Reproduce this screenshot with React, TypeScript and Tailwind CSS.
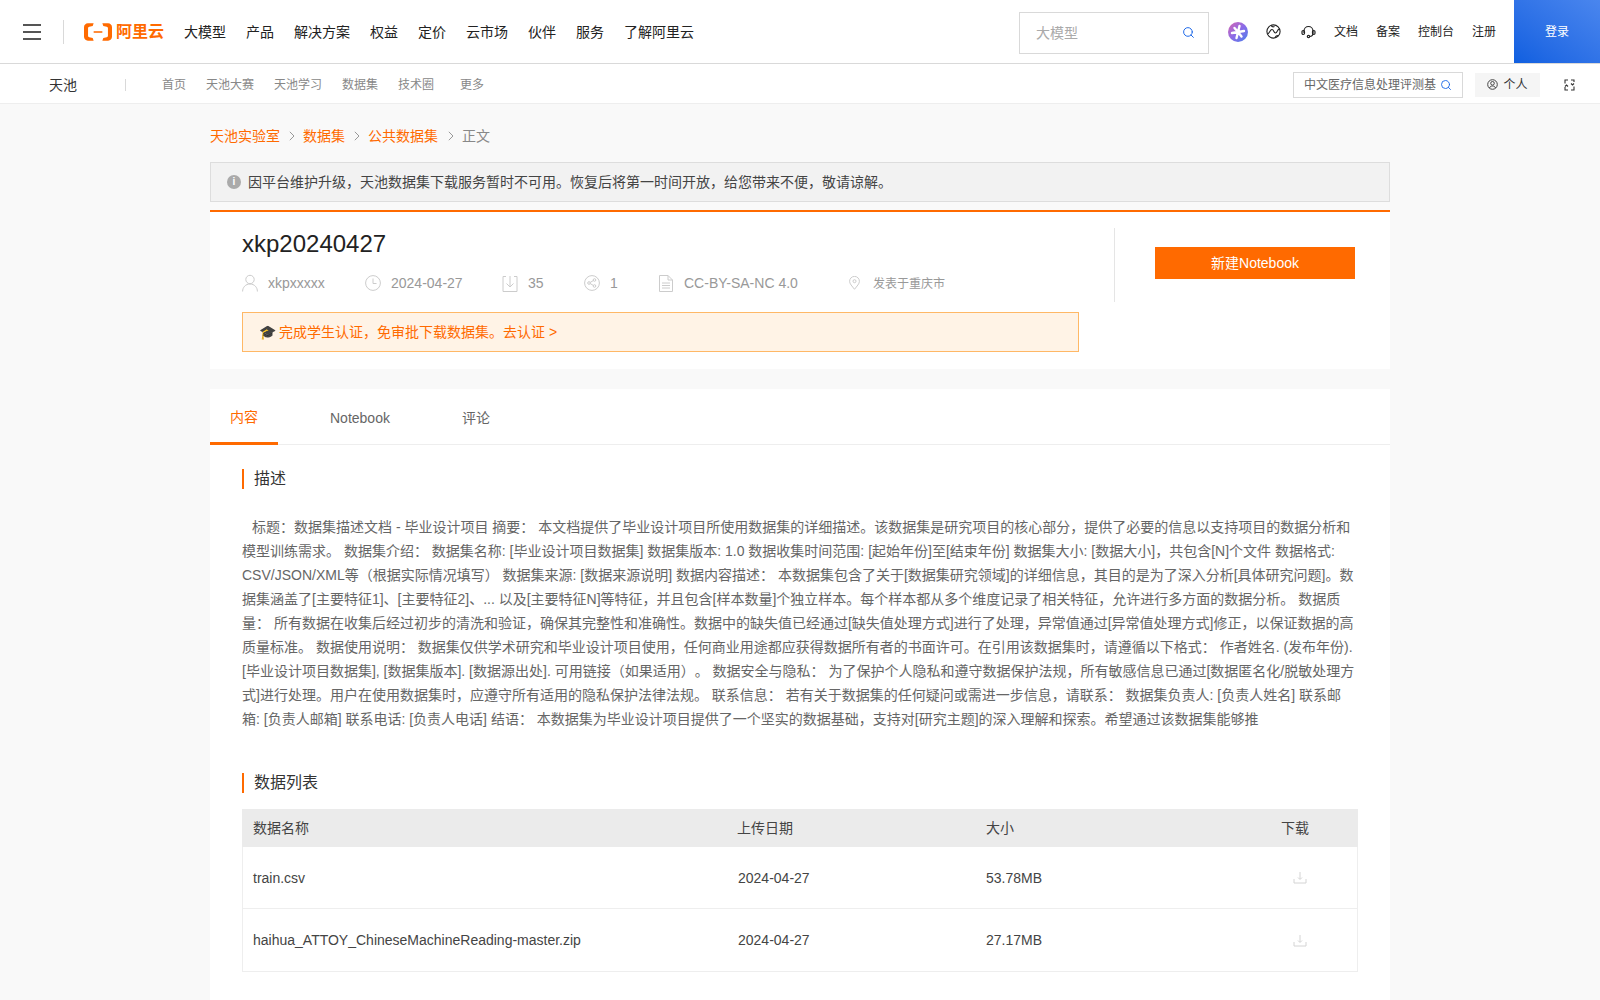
import React from 'react';
import { Search } from 'lucide-react';

const navItems = ['大模型', '产品', '解决方案', '权益', '定价', '云市场', '伙伴', '服务', '了解阿里云'];
const rightLinks = ['文档', '备案', '控制台', '注册'];

const description =
  '标题：数据集描述文档 - 毕业设计项目 摘要： 本文档提供了毕业设计项目所使用数据集的详细描述。该数据集是研究项目的核心部分，提供了必要的信息以支持项目的数据分析和模型训练需求。 数据集介绍： 数据集名称: [毕业设计项目数据集] 数据集版本: 1.0 数据收集时间范围: [起始年份]至[结束年份] 数据集大小: [数据大小]，共包含[N]个文件 数据格式: CSV/JSON/XML等（根据实际情况填写） 数据集来源: [数据来源说明] 数据内容描述： 本数据集包含了关于[数据集研究领域]的详细信息，其目的是为了深入分析[具体研究问题]。数据集涵盖了[主要特征1]、[主要特征2]、... 以及[主要特征N]等特征，并且包含[样本数量]个独立样本。每个样本都从多个维度记录了相关特征，允许进行多方面的数据分析。 数据质量： 所有数据在收集后经过初步的清洗和验证，确保其完整性和准确性。数据中的缺失值已经通过[缺失值处理方式]进行了处理，异常值通过[异常值处理方式]修正，以保证数据的高质量标准。 数据使用说明： 数据集仅供学术研究和毕业设计项目使用，任何商业用途都应获得数据所有者的书面许可。在引用该数据集时，请遵循以下格式： 作者姓名. (发布年份). [毕业设计项目数据集], [数据集版本]. [数据源出处]. 可用链接（如果适用）。 数据安全与隐私： 为了保护个人隐私和遵守数据保护法规，所有敏感信息已通过[数据匿名化/脱敏处理方式]进行处理。用户在使用数据集时，应遵守所有适用的隐私保护法律法规。 联系信息： 若有关于数据集的任何疑问或需进一步信息，请联系： 数据集负责人: [负责人姓名] 联系邮箱: [负责人邮箱] 联系电话: [负责人电话] 结语： 本数据集为毕业设计项目提供了一个坚实的数据基础，支持对[研究主题]的深入理解和探索。希望通过该数据集能够推';

const files = [
  { name: 'train.csv', date: '2024-04-27', size: '53.78MB' },
  { name: 'haihua_ATTOY_ChineseMachineReading-master.zip', date: '2024-04-27', size: '27.17MB' },
];

const Logo = () => (
  <div className="flex items-center gap-1">
    <svg width="28" height="18" viewBox="0 0 29 18" fill="#ff6a00">
      <path d="M10 0H4C1.800 0 0 1.800 0 4v10c0 2.200 1.800 4 4 4h6l-1-2.800-3.500-.8c-.8-.2-1.300-.8-1.300-1.600V5.200c0-.8.5-1.400 1.300-1.600L9 2.800 10 0z" />
      <path d="M19 0h6c2.200 0 4 1.800 4 4v10c0 2.200-1.800 4-4 4h-6l1-2.800 3.500-.8c.8-.2 1.300-.8 1.300-1.600V5.200c0-.8-.5-1.400-1.300-1.600L20 2.800 19 0z" />
      <rect x="10" y="8.200" width="9" height="1.600" />
    </svg>
    <span className="text-base leading-none font-bold text-[#ff6a00]">阿里云</span>
  </div>
);

const StarBadge = () => (
  <div className="w-5 h-5 rounded-full bg-gradient-to-br from-[#d65fb0] via-[#8a6be8] to-[#3f7fea] flex items-center justify-center">
    <svg width="16" height="16" viewBox="0 0 16 16" stroke="#fff" strokeWidth="2.400" strokeLinecap="round">
      <path d="M9.500 2 6.500 14M2 9l12-2M4.500 4 8 8l3.500 4.500" />
    </svg>
  </div>
);

const GlobeIcon = () => (
  <svg width="15" height="15" viewBox="0 0 15 15" fill="none" stroke="#222" strokeWidth="1.100">
    <circle cx="7.500" cy="7.500" r="6.600" />
    <path d="M1.500 10c2-.5 2.500-4.500 4.500-4.500S7.500 9 9.500 9 11.500 4 13.800 5.500M5 1.500c1 1.500 2.500 1.500 3.500 1M9 13.500c.5-1 1.500-2 3-2" />
  </svg>
);

const HeadsetIcon = () => (
  <svg width="15" height="14" viewBox="0 0 15 14" fill="none" stroke="#222" strokeWidth="1.200">
    <path d="M3 8V6a4.500 4.500 0 0 1 9 0v2c0 2-1.500 3.500-3.500 3.500" />
    <rect x="1" y="5.500" width="2.500" height="4" rx="1.200" />
    <rect x="11.500" y="5.500" width="2.500" height="4" rx="1.200" />
    <circle cx="7.500" cy="11.500" r="1.200" />
  </svg>
);

const UserCircle = () => (
  <svg width="11" height="11" viewBox="0 0 11 11" fill="none" stroke="#444" strokeWidth="1">
    <circle cx="5.500" cy="5.500" r="4.800" />
    <circle cx="5.500" cy="4.300" r="1.800" />
    <path d="M2.500 9c.5-1.500 1.700-2 3-2s2.500.5 3 2" />
  </svg>
);

const ExpandIcon = () => (
  <svg width="11" height="12" viewBox="0 0 11 12" fill="none" stroke="#333" strokeWidth="1.100">
    <path d="M4 1H1v3.500M7 1h3v2M1 8v3h3M10 7.500V11H7" />
    <path d="M7 4.500l1.500 1.500L10 4.500M1 7.500 2.500 6 4 7.500" />
  </svg>
);

const Chevron = () => (
  <svg width="6" height="10" viewBox="0 0 6 10" fill="none" stroke="#999" strokeWidth="1">
    <path d="M.8.8 5 5 .8 9.200" />
  </svg>
);

const MetaUser = () => (
  <svg width="16" height="18" viewBox="0 0 16 18" fill="none" stroke="#ccc" strokeWidth="1">
    <circle cx="8" cy="5.500" r="4.200" />
    <path d="M.6 17.500c0-4.200 3-7.500 7.400-7.500s7.400 3.300 7.400 7.500" />
  </svg>
);

const MetaClock = () => (
  <svg width="16" height="16" viewBox="0 0 16 16" fill="none" stroke="#ccc" strokeWidth="1">
    <circle cx="8" cy="8" r="7.400" />
    <path d="M8 3.500V8.500h3.500" />
  </svg>
);

const MetaDownload = () => (
  <svg width="16" height="17" viewBox="0 0 16 17" fill="none" stroke="#ccc" strokeWidth="1">
    <path d="M4 1.500H1v15h14v-15h-3M8 1v11M4.500 8.500 8 12l3.500-3.500" />
  </svg>
);

const MetaShare = () => (
  <svg width="16" height="16" viewBox="0 0 16 16" fill="none" stroke="#ccc" strokeWidth="1">
    <circle cx="8" cy="8" r="7.400" />
    <circle cx="5" cy="8" r="1.300" />
    <circle cx="10.500" cy="5" r="1.300" />
    <circle cx="10.500" cy="11" r="1.300" />
    <path d="M6.200 7.400 9.300 5.600M6.200 8.600l3.100 1.800" />
  </svg>
);

const MetaDoc = () => (
  <svg width="14" height="17" viewBox="0 0 14 17" fill="none" stroke="#ccc" strokeWidth="1">
    <path d="M.5.500h8.500l4.500 4.500v11.500H.500zM9 .5V5h4.500M3 8h8M3 10.500h8M3 13h8" />
  </svg>
);

const MetaPin = () => (
  <svg width="11" height="14" viewBox="0 0 11 14" fill="none" stroke="#ccc" strokeWidth="1">
    <path d="M5.500 13.300C3 10 .6 7.800.6 5.300a4.900 4.900 0 0 1 9.800 0c0 2.500-2.400 4.700-4.900 8z" />
    <circle cx="5.500" cy="5.200" r="1.500" />
  </svg>
);

const RowDownload = () => (
  <svg width="14" height="13" viewBox="0 0 14 13" fill="none" stroke="#d4d4d4" strokeWidth="1">
    <path d="M1 8v4h12V8M7 1v7M5 6.500 7 8.500l2-2" />
  </svg>
);

const SectionTitle = ({ children }: { children: React.ReactNode }) => (
  <div className="h-5 border-l-2 border-[#ff6a00] pl-[10px] flex items-center text-base leading-5 text-[#333]">
    {children}
  </div>
);

export default function App() {
  return (
    <div
      className="h-screen overflow-hidden bg-[#f9f9f9] text-[#333] [text-spacing-trim:space-all]"
      style={{ fontFamily: '"Liberation Sans", "Noto Sans CJK SC", sans-serif' }}
    >
      {/* top bar */}
      <header className="h-16 bg-white border-b border-[#d9d9d9] flex items-center">
        <div className="w-[63px] pl-[23px] shrink-0">
          <div className="w-[18px] h-4 flex flex-col justify-between">
            <div className="h-0.5 bg-[#555]" />
            <div className="h-0.5 bg-[#555]" />
            <div className="h-0.5 bg-[#555]" />
          </div>
        </div>
        <div className="w-px h-6 bg-[#d9d9d9] mr-5" />
        <Logo />
        <nav className="flex gap-5 ml-5 text-sm text-[#222]">
          {navItems.map((item) => (
            <span key={item}>{item}</span>
          ))}
        </nav>
        <div className="ml-auto mt-[2px] w-[190px] h-[42px] border border-[#d9d9d9] flex items-center pl-4 pr-[13px] justify-between">
          <span className="text-sm text-[#aaa]">大模型</span>
          <Search size={13} className="text-[#1a66e8]" strokeWidth={1.800} />
        </div>
        <div className="ml-[19px]"><StarBadge /></div>
        <div className="ml-[18px]"><GlobeIcon /></div>
        <div className="ml-5"><HeadsetIcon /></div>
        <div className="flex gap-[18px] ml-[18px] text-xs text-[#222]">
          {rightLinks.map((item) => (
            <span key={item}>{item}</span>
          ))}
        </div>
        <div className="ml-[18px] w-[86px] h-full bg-gradient-to-tr from-[#0f5fe0] to-[#4a86ee] text-white text-xs flex items-center justify-center">
          登录
        </div>
      </header>

      {/* tianchi bar */}
      <div className="h-10 pt-[2px] bg-white border-b border-[#eee] flex items-center">
        <span className="ml-[49px] text-sm text-[#333]">天池</span>
        <div className="w-px h-3 bg-[#d9d9d9] ml-[48px]" />
        <div className="flex text-xs text-[#888] ml-9">
          <span>首页</span>
          <span className="ml-5">天池大赛</span>
          <span className="ml-5">天池学习</span>
          <span className="ml-5">数据集</span>
          <span className="ml-5">技术圈</span>
          <span className="ml-[26px]">更多</span>
        </div>
        <div className="ml-auto w-[170px] h-[26px] border border-[#d9d9d9] flex items-center pl-2.5 pr-[10px] justify-between">
          <span className="text-xs text-[#666] whitespace-nowrap overflow-hidden w-[132px]">中文医疗信息处理评测基</span>
          <Search size={12} className="text-[#1a66e8]" strokeWidth={1.800} />
        </div>
        <div className="ml-3 w-[65px] h-6 bg-[#f5f5f5] flex items-center justify-center gap-[5px] text-xs text-[#333]">
          <UserCircle />
          <span>个人</span>
        </div>
        <div className="ml-6 mr-[25px]"><ExpandIcon /></div>
      </div>

      <main className="w-[1180px] mx-auto">
        {/* breadcrumb */}
        <div className="h-[58px] pt-[6px] flex items-center text-sm text-[#ff6a00]">
          <span>天池实验室</span>
          <span className="ml-[9px] mr-2"><Chevron /></span>
          <span>数据集</span>
          <span className="ml-[9px] mr-2"><Chevron /></span>
          <span>公共数据集</span>
          <span className="ml-[10px] mr-2"><Chevron /></span>
          <span className="text-[#888]">正文</span>
        </div>

        {/* notice */}
        <div className="h-10 bg-[#f2f2f2] border border-[#ddd] flex items-center pl-4 text-sm text-[#444]">
          <span className="w-[14px] h-[14px] rounded-full bg-[#aaa] text-white text-[10px] leading-[14px] text-center font-bold mr-[7px]">i</span>
          因平台维护升级，天池数据集下载服务暂时不可用。恢复后将第一时间开放，给您带来不便，敬请谅解。
        </div>

        {/* dataset head */}
        <section className="mt-2 h-[159px] bg-white border-t-2 border-[#ff6a00] flex">
          <div className="pl-8 w-[869px] shrink-0">
            <h1 className="mt-[15px] h-[34px] text-2xl leading-[34px] text-[#222]">xkp20240427</h1>
            <div className="mt-3 h-5 flex items-center text-sm text-[#999]">
              <MetaUser />
              <span className="ml-[10px] w-[97px]">xkpxxxxx</span>
              <MetaClock />
              <span className="ml-[10px] w-[111px]">2024-04-27</span>
              <MetaDownload />
              <span className="ml-[10px] w-[56px]">35</span>
              <MetaShare />
              <span className="ml-[10px] w-[49px]">1</span>
              <MetaDoc />
              <span className="ml-[11px] w-[165px]">CC-BY-SA-NC 4.0</span>
              <MetaPin />
              <span className="ml-[13px] mt-[2px] text-xs">发表于重庆市</span>
            </div>
            <div className="mt-[19px] w-[837px] h-10 bg-[#fff3e6] border border-[#ffb866] flex items-center pl-4 text-sm text-[#ff6a00]">
              <span className="text-[#333] mr-[3px] leading-none" style={{ fontFamily: '"DejaVu Sans", sans-serif' }}>🎓</span>
              完成学生认证，免审批下载数据集。去认证 &gt;
            </div>
          </div>
          <div className="ml-[35px] mt-4 h-[74px] border-l border-[#e5e5e5] pl-10 pt-[19px]">
            <button className="w-[200px] h-8 bg-[#ff6a00] text-white text-sm">新建Notebook</button>
          </div>
        </section>

        {/* content */}
        <section className="mt-5 bg-white pb-10">
          <div className="h-14 border-b border-[#eee] flex text-sm text-[#666]">
            <div className="w-[68px] h-14 pt-[2px] border-b-[3px] border-[#ff6a00] text-[#ff6a00] flex items-center justify-center">内容</div>
            <div className="ml-[52px] pt-[2px] flex items-center">Notebook</div>
            <div className="ml-[72px] pt-[2px] flex items-center">评论</div>
          </div>
          <div className="px-8">
            <div className="pt-6"><SectionTitle>描述</SectionTitle></div>
            <p className="mt-[26px] text-sm leading-6 text-[#666] indent-[10px]">{description}</p>
            <div className="mt-[42px]"><SectionTitle>数据列表</SectionTitle></div>
            <div className="mt-4 text-sm">
              <div className="h-[38px] bg-[#ebebeb] grid grid-cols-[485px_248px_300px_83px] items-center text-[#444]">
                <span className="pl-[11px]">数据名称</span>
                <span className="pl-[10px]">上传日期</span>
                <span className="pl-[11px]">大小</span>
                <span className="pl-[6px]">下载</span>
              </div>
              {files.map((f) => (
                <div key={f.name} className="h-[62px] last:h-[63px] border-x border-b border-[#eee] grid grid-cols-[485px_248px_300px_83px] items-center text-[#444]">
                  <span className="pl-[10px]">{f.name}</span>
                  <span className="pl-[10px]">{f.date}</span>
                  <span className="pl-[10px]">{f.size}</span>
                  <span className="pl-[17px]"><RowDownload /></span>
                </div>
              ))}
            </div>
          </div>
        </section>
      </main>
    </div>
  );
}
